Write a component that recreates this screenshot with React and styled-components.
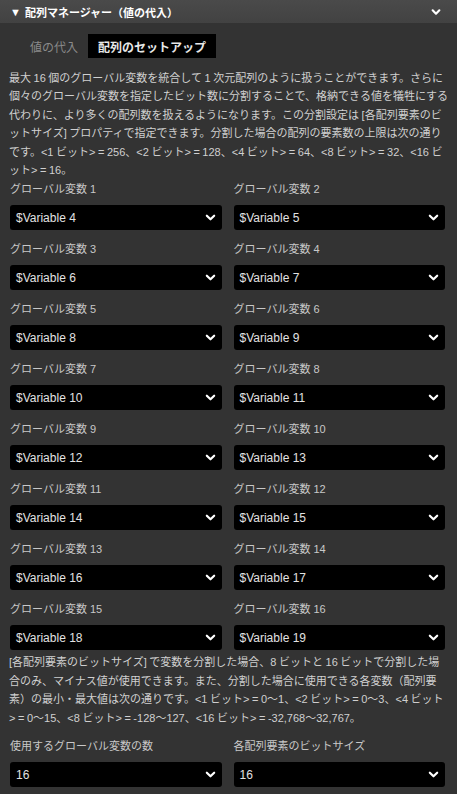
import React from "react";
import styled, { createGlobalStyle } from "styled-components";

const GlobalStyle = createGlobalStyle`
  html, body {
    margin: 0;
    padding: 0;
    background: #333333;
  }
  body {
    font-family: "Liberation Sans", "Noto Sans CJK JP", sans-serif;
    color: #d4d4d4;
  }
`;

const Panel = styled.div`
  width: 457px;
  min-height: 794px;
  background: #333333;
`;

const Header = styled.div`
  height: 23px;
  display: flex;
  align-items: center;
  justify-content: space-between;
  padding: 0 16px 0 10px;
  background: linear-gradient(#4a4a4a, #424242);
  color: #ffffff;
  font-size: 11px;
  font-weight: 700;
  box-sizing: border-box;
`;

const HeaderTitle = styled.div`
  display: flex;
  align-items: center;
  gap: 4px;
`;

const Triangle = styled.span`
  font-size: 11px;
`;

const Tabs = styled.div`
  display: flex;
  align-items: center;
  padding: 11px 0 0 20px;
`;

const Tab = styled.div`
  height: 24px;
  display: flex;
  align-items: center;
  padding: 0 10px;
  font-size: 12px;
  font-weight: ${(p) => (p.$active ? 700 : 400)};
  color: ${(p) => (p.$active ? "#e8e8e8" : "#8a8a8a")};
  background: ${(p) => (p.$active ? "#000000" : "transparent")};
`;

const Body = styled.div`
  padding: 0 12px 0 10px;
`;

const Paragraph = styled.p`
  margin: ${(p) => p.$margin};
  margin-left: -1px;
  margin-right: -3px;
  font-size: 11px;
  word-spacing: -0.5px;
  line-height: 18.4px;
  color: #d0d0d0;
`;

const Grid = styled.div`
  display: grid;
  grid-template-columns: 1fr 1fr;
  column-gap: 12px;
  row-gap: 12px;
`;

const Field = styled.div`
  display: flex;
  flex-direction: column;
  gap: 8px;
`;

const Label = styled.div`
  font-size: 11px;
  line-height: 15px;
  color: #c8c8c8;
`;

const Select = styled.div`
  height: 25px;
  background: #000000;
  border-radius: 3px;
  display: flex;
  align-items: center;
  justify-content: space-between;
  padding: 0 6px;
  font-size: 12px;
  color: #e2e2e2;
`;

const Chevron = ({ size = 11, stroke = 2.4 }) => (
  <svg width={size} height={size} viewBox="0 0 12 12" fill="none">
    <path
      d="M2 4 L6 8 L10 4"
      stroke="#ffffff"
      strokeWidth={stroke}
      strokeLinecap="round"
      strokeLinejoin="round"
    />
  </svg>
);

const Dropdown = ({ label, value }) => (
  <Field>
    <Label>{label}</Label>
    <Select>
      <span>{value}</span>
      <Chevron />
    </Select>
  </Field>
);

const variables = Array.from({ length: 16 }, (_, i) => ({
  label: `グローバル変数 ${i + 1}`,
  value: `$Variable ${i + 4}`,
}));

export default function App() {
  return (
    <Panel>
      <GlobalStyle />
      <Header>
        <HeaderTitle>
          <Triangle>▼</Triangle>
          <span>配列マネージャー（値の代入）</span>
        </HeaderTitle>
        <Chevron size={10} stroke={2.6} />
      </Header>
      <Tabs>
        <Tab>値の代入</Tab>
        <Tab $active>配列のセットアップ</Tab>
      </Tabs>
      <Body>
        <Paragraph $margin="11px 0 3px">
          最大 16 個のグローバル変数を統合して 1 次元配列のように扱うことができます。さらに個々のグローバル変数を指定したビット数に分割することで、格納できる値を犠牲にする代わりに、より多くの配列数を扱えるようになります。この分割設定は [各配列要素のビットサイズ] プロパティで指定できます。分割した場合の配列の要素数の上限は次の通りです。&lt;1 ビット&gt; = 256、&lt;2 ビット&gt; = 128、&lt;4 ビット&gt; = 64、&lt;8 ビット&gt; = 32、&lt;16 ビット&gt; = 16。
        </Paragraph>
        <Grid>
          {variables.map((v) => (
            <Dropdown key={v.label} label={v.label} value={v.value} />
          ))}
        </Grid>
        <Paragraph $margin="3px 0 12px">
          [各配列要素のビットサイズ] で変数を分割した場合、8 ビットと 16 ビットで分割した場合のみ、マイナス値が使用できます。また、分割した場合に使用できる各変数（配列要素）の最小・最大値は次の通りです。&lt;1 ビット&gt; = 0〜1、&lt;2 ビット&gt; = 0〜3、&lt;4 ビット&gt; = 0〜15、&lt;8 ビット&gt; = -128〜127、&lt;16 ビット&gt; = -32,768〜32,767。
        </Paragraph>
        <Grid>
          <Dropdown label="使用するグローバル変数の数" value="16" />
          <Dropdown label="各配列要素のビットサイズ" value="16" />
        </Grid>
      </Body>
    </Panel>
  );
}
